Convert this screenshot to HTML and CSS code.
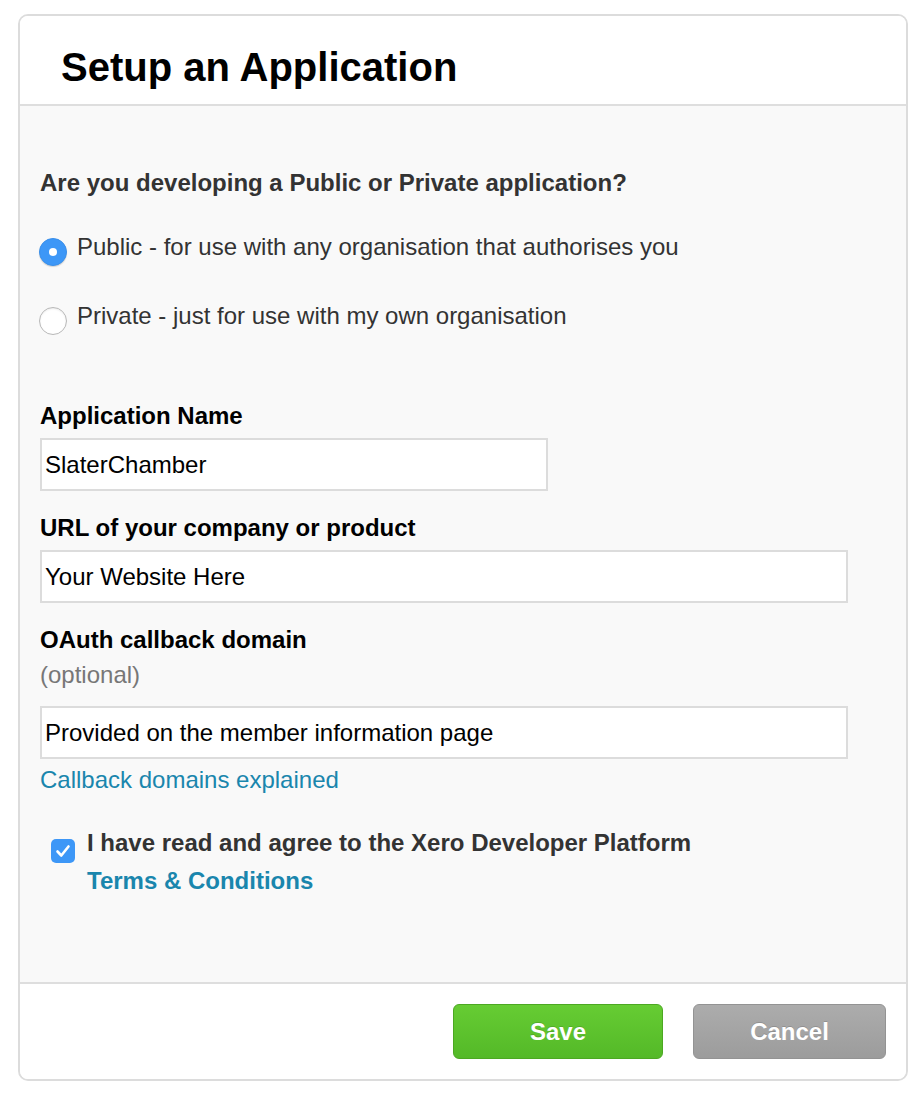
FILE: index.html
```html
<!DOCTYPE html>
<html lang="en">
<head>
<meta charset="utf-8">
<title>Setup an Application</title>
<link rel="stylesheet" href="styles.css">
</head>
<body>
<div class="card">
  <div class="card-header">
    <h1 class="title">Setup an Application</h1>
  </div>
  <div class="card-body">
    <p class="question">Are you developing a Public or Private application?</p>
    <div class="radio-row public-row">
      <span class="radio checked"></span>
      <span class="radio-label">Public - for use with any organisation that authorises you</span>
    </div>
    <div class="radio-row private-row">
      <span class="radio"></span>
      <span class="radio-label">Private - just for use with my own organisation</span>
    </div>

    <div class="field field-name">
      <div class="label">Application Name</div>
      <div class="input input-short">SlaterChamber</div>
    </div>
    <div class="field field-url">
      <div class="label">URL of your company or product</div>
      <div class="input input-long">Your Website Here</div>
    </div>
    <div class="field field-oauth">
      <div class="label">OAuth callback domain</div>
      <div class="optional">(optional)</div>
      <div class="input input-long">Provided on the member information page</div>
      <a class="link" href="#">Callback domains explained</a>
    </div>

    <div class="agree">
      <span class="checkbox">
        <svg width="24" height="24" viewBox="0 0 24 24"><path d="M6.5 12.5 L10.3 16.5 L17.5 7.5" fill="none" stroke="#fff" stroke-width="2.6" stroke-linecap="round" stroke-linejoin="round"/></svg>
      </span>
      <div class="agree-text">
        <div>I have read and agree to the Xero Developer Platform</div>
        <a class="terms" href="#">Terms &amp; Conditions</a>
      </div>
    </div>
  </div>
  <div class="card-footer">
    <button class="btn btn-save">Save</button>
    <button class="btn btn-cancel">Cancel</button>
  </div>
</div>
</body>
</html>
```
FILE: styles.css
```css
html, body {
  margin: 0;
  padding: 0;
  background: #fff;
}
body {
  font-family: "Liberation Sans", Arial, Helvetica, sans-serif;
  color: #333;
  padding: 14px 16px 0 18px;
}
.card {
  border: 2px solid #dcdcdc;
  border-radius: 10px;
  overflow: hidden;
  height: 1067px;
  box-sizing: border-box;
  display: flex;
  flex-direction: column;
}
.card-header {
  background: #fff;
  height: 90px;
  box-sizing: border-box;
  border-bottom: 2px solid #dedede;
  padding: 29px 0 0 41px;
}
.title {
  margin: 0;
  font-size: 40px;
  line-height: 44px;
  font-weight: bold;
  color: #000;
}
.card-body {
  background: #f9f9f9;
  flex: 1;
  padding: 0 0 0 20px;
}
.question {
  margin: 63px 0 0 0;
  font-size: 24px;
  line-height: 28px;
  font-weight: bold;
  color: #333;
}
.radio-row {
  display: flex;
  align-items: flex-start;
  gap: 10px;
}
.public-row { margin-top: 36px; }
.private-row { margin-top: 36px; }
.radio {
  flex: none;
  width: 28px;
  height: 28px;
  box-sizing: border-box;
  border-radius: 50%;
  background: #fff;
  border: 1px solid #b8b8b8;
  box-shadow: inset 0 1px 2px rgba(0,0,0,0.08);
  margin: 5px 0 0 -1px;
  position: relative;
}
.radio.checked {
  background: #3d97f7;
  border-color: #3a8fea;
  box-shadow: 0 1px 1px rgba(0,0,0,0.15);
}
.radio.checked::after {
  content: "";
  position: absolute;
  left: 50%;
  top: 50%;
  width: 8px;
  height: 8px;
  margin: -4px 0 0 -4px;
  border-radius: 50%;
  background: #fff;
}
.radio-label {
  font-size: 24px;
  line-height: 28px;
  color: #333;
}
.field-name { margin-top: 67px; }
.field-url { margin-top: 23px; }
.field-oauth { margin-top: 23px; }
.label {
  font-size: 24px;
  line-height: 28px;
  font-weight: bold;
  color: #000;
}
.optional {
  font-size: 24px;
  line-height: 28px;
  color: #777;
  margin-top: 7px;
  margin-bottom: 17px;
}
.input {
  margin-top: 8px;
  height: 53px;
  box-sizing: border-box;
  background: #fff;
  border: 2px solid #dcdcdc;
  font-size: 24px;
  line-height: 49px;
  padding-left: 3px;
  color: #000;
}
.field-oauth .input { margin-top: 0; }
.input-short { width: 508px; }
.input-long { width: 808px; }
.link {
  display: block;
  margin-top: 7px;
  font-size: 24px;
  line-height: 28px;
  color: #1a86ad;
  text-decoration: none;
}
.agree {
  display: flex;
  align-items: flex-start;
  gap: 12px;
  margin-top: 35px;
  padding-left: 11px;
}
.checkbox {
  flex: none;
  width: 24px;
  height: 24px;
  border-radius: 5px;
  background: #3d97f7;
  margin-top: 10px;
  display: flex;
}
.agree-text {
  font-size: 24px;
  line-height: 28px;
  font-weight: bold;
  color: #333;
}
.terms {
  display: block;
  margin-top: 10px;
  color: #1a86ad;
  text-decoration: none;
}
.card-footer {
  background: #fff;
  border-top: 2px solid #dedede;
  height: 97px;
  box-sizing: border-box;
  display: flex;
  justify-content: flex-end;
  align-items: flex-start;
  gap: 30px;
  padding: 20px 20px 0 0;
}
.btn {
  height: 55px;
  border-radius: 6px;
  font-family: "Liberation Sans", Arial, Helvetica, sans-serif;
  font-size: 24px;
  font-weight: bold;
  color: #fff;
  cursor: pointer;
  text-shadow: 0 -1px 0 rgba(0,0,0,0.15);
}
.btn-save {
  width: 210px;
  background: linear-gradient(#66cc33, #54b928);
  border: 1px solid #4ca822;
}
.btn-cancel {
  width: 193px;
  background: linear-gradient(#acacac, #9c9c9c);
  border: 1px solid #939393;
}
```
